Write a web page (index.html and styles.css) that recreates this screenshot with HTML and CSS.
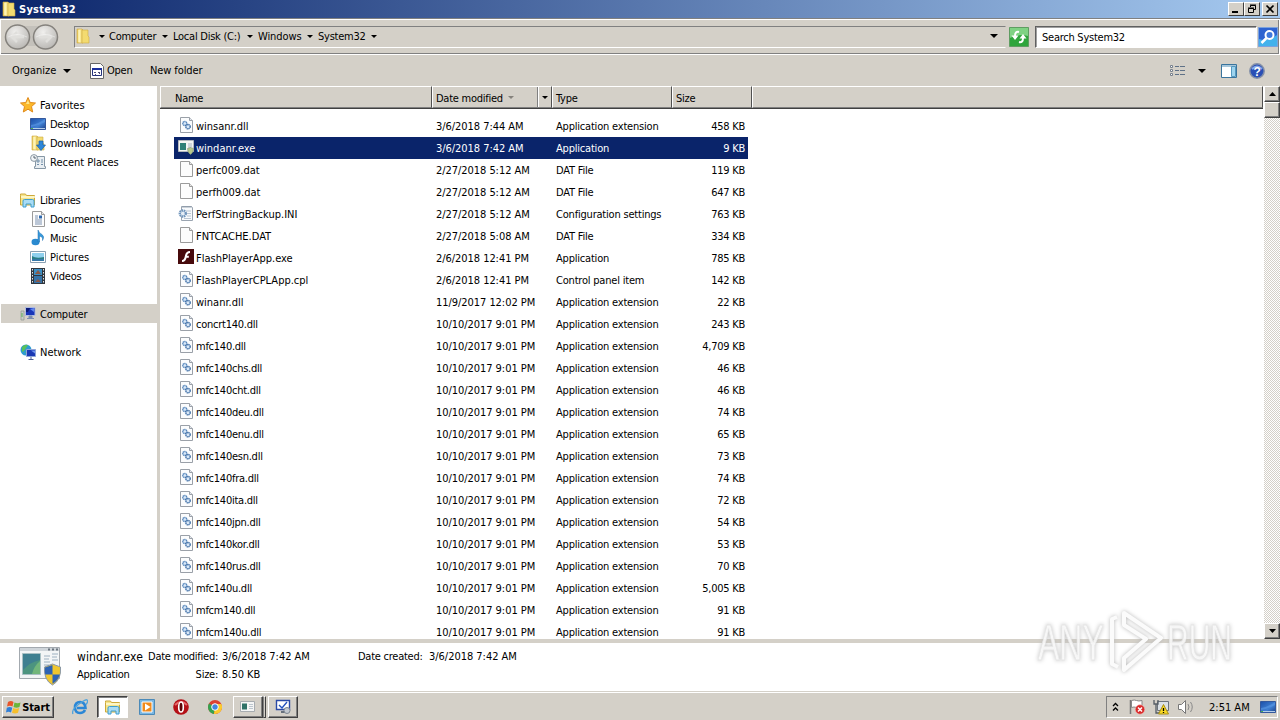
FILE: index.html
```html
<!DOCTYPE html>
<html lang="en">
<head>
  <meta charset="UTF-8" />
  <title>System32</title>
  <link rel="stylesheet" href="styles.css">
</head>
<body>
  <!-- icons used more than once -->
  <svg class="defs" width="0" height="0">
    <linearGradient id="gFolder" x1="0" x2="1"><stop offset="0" stop-color="#e5c452"/><stop offset=".5" stop-color="#fff3a8"/><stop offset="1" stop-color="#dcb540"/></linearGradient>
    <linearGradient id="gBlue" x1="0" y1="0" x2="1" y2="1"><stop offset="0" stop-color="#1c4fa8"/><stop offset=".6" stop-color="#3f7fd2"/><stop offset="1" stop-color="#1d3f86"/></linearGradient>
    <radialGradient id="gBall" cx=".4" cy=".3" r=".8"><stop offset="0" stop-color="#f0efed"/><stop offset="1" stop-color="#b4b2ae"/></radialGradient>
    <symbol id="folder" viewBox="0 0 16 16">
      <path d="M2 1h5l1 1v13H2z" fill="url(#gFolder)" stroke="#d0aa3c" stroke-width=".6"/>
      <path d="M7 2h6v6l1 1v6H7z" fill="#f3db70" stroke="#cfab45" stroke-width=".6"/>
      <path d="M4 2v12" stroke="#fffbd0"/>
    </symbol>
    <symbol id="library" viewBox="0 0 16 16">
      <path d="M.5 3.500V2h5l1 1.500h8V13H.5z" fill="#f6e58a" stroke="#cda93a"/>
      <path d="M1 5h14" stroke="#fffbd9" stroke-width="1.500"/>
      <path d="M3 15V9q0-1.500 1.500-1.500h8Q14 7.500 14 9v6h-3v-3H6v3z" fill="#a9dcf5" stroke="#3e9ecf"/>
    </symbol>
    <symbol id="desktop" viewBox="0 0 16 16">
      <path d="M.5 2.500h15v11H.5z" fill="url(#gBlue)" stroke="#34589c"/>
      <path d="M1 9q7-1 14-6v3q-7 4-14 5z" fill="#5c9ae4" opacity=".6"/>
      <path d="M1 12.500h14" stroke="#b5cde8"/><path d="M1 12.500h2" stroke="#4bb34f"/>
    </symbol>
    <symbol id="dll" viewBox="0 0 16 16">
      <path d="M2.500.5h9l3 3v12h-12z" fill="#fbfcfd" stroke="#9aa0a8"/>
      <path d="M11.500.5v3h3" fill="#e4e8ee" stroke="#9aa0a8"/>
      <circle cx="6.800" cy="6.500" r="2" fill="#d9e8f8" stroke="#5686bb" stroke-width="1.400" stroke-dasharray="1.200 .4"/>
      <circle cx="10" cy="9.700" r="2.200" fill="#d9e8f8" stroke="#3c6ca4" stroke-width="1.400" stroke-dasharray="1.200 .4"/>
    </symbol>
    <symbol id="page" viewBox="0 0 16 16">
      <path d="M2.500.5h9l3 3v12h-12z" fill="#fcfcfc" stroke="#9b9b9b"/>
      <path d="M11.500.5v3h3" fill="#e8e8e8" stroke="#9b9b9b"/>
    </symbol>
    <symbol id="ini" viewBox="0 0 16 16">
      <path d="M3.500 1.500h10l1 1v13h-11z" fill="#f8fafc" stroke="#9aa4b0"/>
      <path d="M5 1v2M7 1v2M9 1v2M11 1v2M13 1v2" stroke="#8794a4" stroke-width=".8"/>
      <path d="M8 6h5M9 8.500h4M9 11h4M6 13.500h7" stroke="#b8c4d2"/>
      <circle cx="4.800" cy="8.500" r="3" fill="#e6eef6" stroke="#6f94bb" stroke-width="2.400" stroke-dasharray="1.500 .6"/>
    </symbol>
    <symbol id="exe" viewBox="0 0 16 16">
      <path d="M.5 1.500h15v11H.5z" fill="#f4f5f3" stroke="#b3b8bd"/>
      <path d="M2 4h6v7H2z" fill="#2f8077"/><path d="M10 5h4M10 7h4M10 9h3" stroke="#a9b7c4"/>
      <path d="M9.500 9.500l3-1 3 1q0 4-3 6-3-2-3-6z" fill="#b8c98c" stroke="#7f917a" stroke-width=".6"/>
    </symbol>
    <symbol id="flash" viewBox="0 0 16 16">
      <path d="M0 0h16v15H0z" fill="#470a0c"/>
      <path d="M12 3Q8.500 3 7.800 7.500T4 12M7.300 7.700h3.500" fill="none" stroke="#fff" stroke-width="2"/>
    </symbol>
    <symbol id="computer" viewBox="0 0 16 16">
      <path d="M1 5h3v9H1z" fill="#c8ccc8" stroke="#8e958f" stroke-width=".7"/><path d="M2 7v4" stroke="#5cb357"/>
      <path d="M5.500 1.500h9.500v8H5.500z" fill="#1935b8" stroke="#aebbe0"/>
      <path d="M6 2h4l-2 4H6z" fill="#0a1a78"/><path d="M10 3l4-1v4z" fill="#5f86ee"/>
      <path d="M9 10h3v2H9zM7 12.500h7" fill="#7c8cb0" stroke="#7c8cb0"/>
    </symbol>
  </svg>

  <div class="titlebar">
    <svg class="ico"><use href="#folder"/></svg>
    <span class="title">System32</span>
    <div class="winbtns">
      <span class="wbtn"><svg width="14" height="12"><path d="M3 9h6" stroke="#000" stroke-width="2"/></svg></span>
      <span class="wbtn"><svg width="14" height="12"><path d="M5.500 4V2.500h5v4H9M5 2h6M3.500 5.500h5v4h-5zM3 5h6" fill="none" stroke="#000"/></svg></span>
      <span class="wbtn close"><svg width="14" height="12"><path d="M3.500 2.500l7 7M10.500 2.500l-7 7" stroke="#000" stroke-width="1.700"/></svg></span>
    </div>
  </div>

  <div class="navbar">
    <svg class="backfwd" width="56" height="28">
      <path d="M14 3h28v20H14z" fill="#c4c1bb"/>
      <circle cx="13.500" cy="14" r="12" fill="url(#gBall)" stroke="#85827d" stroke-width="1.500"/>
      <circle cx="41.500" cy="14" r="12" fill="url(#gBall)" stroke="#85827d" stroke-width="1.500"/>
      <path d="M20 14H8M13 9l-5 5 5 5M35 14h12M42 9l5 5-5 5" fill="none" stroke="#e0dfdc" stroke-width="2.500"/>
      <path d="M4 14q9-5 19 0M32 14q9-5 19 0" fill="none" stroke="#fff" opacity=".4"/>
    </svg>
    <div class="address">
      <svg class="ico"><use href="#folder"/></svg>
      <i class="arr a1"></i><span class="c1">Computer</span>
      <i class="arr"></i><span class="c2">Local Disk (C:)</span>
      <i class="arr"></i><span class="c3">Windows</span>
      <i class="arr"></i><span class="c4">System32</span>
      <i class="arr"></i>
      <i class="arr big drop"></i>
    </div>
    <svg class="refresh" width="20" height="20">
      <path d="M.5.5h19v19H.5z" fill="#2fa53c" stroke="#5f9d62"/><path d="M1 1h18v8Q10 6 1 11z" fill="#7fd283"/>
      <path d="M10 5q-4-1-4 4M10 15q4 1 4-4" fill="none" stroke="#fff" stroke-width="2"/>
      <path d="M2.500 8.500h7L6 13zM10.500 11.500h7L14 7z" fill="#fff"/>
    </svg>
    <div class="search">Search System32</div>
    <svg class="go" width="20" height="20">
      <path d="M.5.5h19v19H.5z" fill="#2e63d0" stroke="#7ba2dd"/><path d="M1 12q9 3 18-4v11H1z" fill="#43b2ec"/>
      <circle cx="11.500" cy="8" r="4" fill="#3f78dc" stroke="#fff" stroke-width="2"/><path d="M8.500 11l-5 5" stroke="#fff" stroke-width="2.500"/>
    </svg>
  </div>

  <div class="toolbar">
    <span class="t1">Organize</span><i class="arr big"></i>
    <svg class="openico" width="14" height="16"><path d="M.5.5h10l3 3v12H.5z" fill="#fff" stroke="#666"/><path d="M2.500 5.500h9v7h-9z" fill="#fff" stroke="#26347c"/><path d="M2 6h10" stroke="#1b2f9c" stroke-width="2"/><path d="M4 9.500h2M8 9.500h2M5 11.500h1M9 10.500h1" stroke="#4a4a7a"/></svg>
    <span class="t2">Open</span>
    <span class="t3">New folder</span>
    <svg class="views" width="16" height="14"><path d="M.5 1.500h2v2h-2zM.5 5.500h2v2h-2zM.5 9.500h2v2h-2z" fill="#fff" stroke="#77808c"/><path d="M5 2.500h4M10 2.500h5M5 6.500h4M10 6.500h5M5 10.500h4M10 10.500h5" stroke="#5f7187"/></svg>
    <i class="arr big"></i>
    <svg class="preview" width="16" height="14"><path d="M.5.5h15v13H.5z" fill="#fff" stroke="#39749d"/><path d="M1 2h14" stroke="#4f8db5"/><path d="M10.500 2.500h4v10h-4z" fill="#9ed4ef" stroke="#5598bf"/></svg>
    <svg class="help" width="16" height="16"><circle cx="8" cy="8" r="7.200" fill="#2a4fb5" stroke="#8490a8" stroke-width="1.500"/><path d="M3 6q5-5 10 0" stroke="#85a8ea" stroke-width="2" fill="none"/><text x="8" y="12.500" text-anchor="middle">?</text></svg>
  </div>

  <div class="main">
    <div class="sidebar">
      <div class="item wide"><svg class="ico"><path d="M8 .5l2.200 5 5.300.5-4 3.600 1.200 5.400L8 12.200 3.300 15l1.200-5.400L.5 6l5.300-.5z" fill="#fbb829" stroke="#e08a1c"/><path d="M8 3l1.500 4H6z" fill="#ffe68a"/></svg><span>Favorites</span></div>
      <div class="item sub"><svg class="ico"><use href="#desktop"/></svg><span>Desktop</span></div>
      <div class="item sub"><svg class="ico"><use href="#folder"/><path d="M9 6h4v4h2.500L11 15.500 6.500 10H9z" fill="#2c86d8" stroke="#1b5ea6" stroke-width=".7"/></svg><span>Downloads</span></div>
      <div class="item sub wide"><svg class="ico"><path d="M5.500 2.500h9v10h1v2h-11v-2h1z" fill="#e9eef2" stroke="#8697a5"/><path d="M7 6h2v2H7zM11 6h2M11 8h2M7 10.500h2M11 10.500h2" fill="none" stroke="#7390aa"/><circle cx="4" cy="4" r="3.400" fill="#f2f5f7" stroke="#8a97a2"/><path d="M4 2v2h2" fill="none" stroke="#55626e"/></svg><span>Recent Places</span></div>
      <div class="item"></div>
      <div class="item"><svg class="ico"><use href="#library"/></svg><span>Libraries</span></div>
      <div class="item sub"><svg class="ico"><use href="#page"/><path d="M5 5h3M5 7h3M5 9h7M5 11h7M5 13h7" stroke="#7d92b1"/><path d="M9 4.500h3v3H9z" fill="#2f68ad"/></svg><span>Documents</span></div>
      <div class="item sub"><svg class="ico"><ellipse cx="5.500" cy="12" rx="4" ry="3.200" fill="#2a8ad0"/><path d="M8 12V0q1 3 4 4.500 3 2 .5 6 1-3.500-3-4.500v6z" fill="#389bdc" stroke="#1c6fb0" stroke-width=".5"/></svg><span>Music</span></div>
      <div class="item sub wide"><svg class="ico"><path d="M.5 2.500h15v11H.5z" fill="#fff" stroke="#8aa0b2"/><path d="M2 4h12v5H2z" fill="#8fd0ee"/><path d="M2 7q4 3 12 1v4H2z" fill="#2a7f86"/><path d="M2 10h12v2H2z" fill="#3578a8"/></svg><span>Pictures</span></div>
      <div class="item sub"><svg class="ico"><path d="M1 0h14v16H1z" fill="#30363d"/><path d="M4 1h8v6H4z" fill="#3b8fc4"/><path d="M4 8h8v7H4z" fill="#3573a8"/><path d="M5 6l3-4 3 4zM5 14l3-3 3 3z" fill="#8a5948"/><path d="M2.500 1v15M13.500 1v15" stroke="#e3e7ea" stroke-dasharray="1.500 1.500"/></svg><span>Videos</span></div>
      <div class="item"></div>
      <div class="item on"><svg class="ico"><use href="#computer"/></svg><span>Computer</span></div>
      <div class="item"></div>
      <div class="item wide"><svg class="ico"><circle cx="6" cy="6" r="5.500" fill="#2d9bd2"/><path d="M2 3q3-3 6-2L6 4 4 7 2 8zM5 8l4 1-2 2z" fill="#5ac15a"/><path d="M6.500 5.500h9v7h-9z" fill="#1a38b4" stroke="#8fa5d8"/><path d="M11 6.500l4 0v3z" fill="#6f95ee"/><path d="M11 13v2M8.500 15.500h5" stroke="#4b5f98"/></svg><span>Network</span></div>
    </div>

    <div class="content">
      <div class="list">
        <div class="thead">
          <span class="th name">Name</span>
          <span class="th date"><b>Date modified</b><i class="arr gray"></i><em><i class="arr"></i></em></span>
          <span class="th type">Type</span>
          <span class="th size">Size</span>
          <span class="th rest"></span>
        </div>
        <div class="rows" id="rows"></div>
      </div>
      <div class="scroll">
        <span class="sbtn"><svg width="7" height="4"><path d="M3.500 0L7 4H0z"/></svg></span>
        <span class="thumb"></span>
        <span class="track"></span>
        <span class="sbtn"><svg width="7" height="4"><path d="M3.500 4L7 0H0z"/></svg></span>
      </div>
    </div>
  </div>

  <div class="details">
    <svg width="44" height="42">
      <path d="M1.500 2.500h40v31h-40z" fill="#f3f5f6" stroke="#a3a9af"/><path d="M2 4.500h39" stroke="#cfd5da" stroke-width="3"/><path d="M30 4.500h2M34 4.500h2M38 4.500h2" stroke="#6c7680" stroke-width="2"/>
      <path d="M4.500 8.500h18v21h-18z" fill="#4c947f" stroke="#a7bfc3"/><path d="M5 9h17v6Q12 17 5 25z" fill="#3e7f90"/><path d="M14 29q2-8 8-13v13z" fill="#72b67b"/>
      <path d="M26 11h6M26 14h5M26 17h6M26 20h5M34 9h6M34 12h5M34 15h6" stroke="#9db0c0"/>
      <path d="M34.500 19l8 3q1 13-8 18-9-5-8-18z" fill="#f0c62e" stroke="#8a98a8"/>
      <path d="M34.500 20v9.500h-7.300q-.6-3-.2-7zM34.500 29.500h7.300q-1.600 6-7.300 9.300z" fill="#2d63b4"/>
    </svg>
    <div class="dcol d1"><span class="fname">windanr.exe</span><span>Application</span></div>
    <div class="dcol d2"><span>Date modified:</span><span>Size:</span></div>
    <div class="dcol d3"><span>3/6/2018 7:42 AM</span><span>8.50 KB</span></div>
    <div class="dcol d4"><span>Date created:</span></div>
    <div class="dcol d5"><span>3/6/2018 7:42 AM</span></div>
  </div>

  <div class="taskbar">
    <div class="start">
      <svg width="16" height="16"><path d="M2 3q3-2 5.500 0L6.500 7.500Q4 6 1 7.500z" fill="#e8552a"/><path d="M8.500 3.500q3 1.500 6 0l-1 4.500q-3 1.500-6 0z" fill="#6ab53a"/><path d="M.8 8.800q3-1.500 5.500 0L5 13.500q-2.500-1.500-5 0z" fill="#2f7fd8"/><path d="M7.200 9q3 1.500 6 0L12 13.800q-3 1.500-6 0z" fill="#f6bf2c"/></svg>
      <span>Start</span>
    </div>
    <div class="quick">
      <svg class="ql" viewBox="0 0 16 16"><path d="M13 11q-1.500 3-5 3-5 0-5-5.500T8 3q5 0 5.500 6H5" fill="none" stroke="#2b87d6" stroke-width="2.600"/><path d="M1 15Q-1 11 7 5t8.500-3.500Q16 3 14 5.500" fill="none" stroke="#4fa3dd" stroke-width="1.300"/></svg>
      <span class="tb pressed"><svg class="ql"><use href="#library"/></svg></span>
      <svg class="ql" viewBox="0 0 16 16"><path d="M.5.5h15v15H.5z" fill="#79b6e2" stroke="#4c8ab8"/><path d="M3 3h10v10H3z" fill="#f08a1d" stroke="#fff"/><path d="M6 4.500L11.500 8 6 11.500z" fill="#fff"/></svg>
      <svg class="ql" viewBox="0 0 16 16"><circle cx="8" cy="8" r="7.800" fill="#b41016"/><path d="M2 6q6-6 12 0" stroke="#e4686a" stroke-width="2" fill="none"/><ellipse cx="8" cy="8" rx="2.300" ry="5" fill="#5b0508" stroke="#fff" stroke-width="1.600"/></svg>
      <svg class="ql" viewBox="0 0 16 16"><circle cx="8" cy="8" r="7" fill="#dc4133"/><path d="M8 8L2 4.500A7 7 0 0 0 7 15z" fill="#33a350"/><path d="M8 8L7 15A7 7 0 0 0 14.300 5H8z" fill="#fbcb2e"/><circle cx="8" cy="8" r="3.300" fill="#4285e0" stroke="#fff"/></svg>
      <span class="tb"><svg class="ql" viewBox="0 0 16 16"><path d="M.5 2.500h14v10H.5z" fill="#f4f5f5" stroke="#a7acb0"/><path d="M2 4.500h5v6H2z" fill="#2f7268"/><path d="M9 5.500h4M9 7.500h4M9 9.500h4" stroke="#bcc6ce"/></svg></span><span class="edge"></span>
      <span class="tb"><svg class="ql" viewBox="0 0 16 16"><path d="M1.500 1.500h13v9h-13z" fill="#fff" stroke="#2949a6" stroke-width="1.400"/><path d="M4 6l3 3 5-6" fill="none" stroke="#2352be" stroke-width="1.400"/><path d="M6 13h4" stroke="#67707c" stroke-width="2"/><circle cx="12" cy="11.500" r="3" fill="#c2c8cf" stroke="#7c8590"/></svg></span>
    </div>
    <div class="tray">
      <svg class="chev" width="7" height="10"><path d="M1 4l2.500-2.500L6 4M1 8.500L3.500 6 6 8.500" fill="none" stroke="#000" stroke-width="1.300"/></svg>
      <svg class="flag" width="16" height="16"><path d="M1.500 1v14" stroke="#777" stroke-width="1.500"/><path d="M2.500 1.500q3-1 5 0t5.500 0v7q-3 1-5.500 0t-5 0z" fill="#fff" stroke="#888"/><circle cx="11" cy="10.500" r="4.700" fill="#d92a2a" stroke="#f3b4b0" stroke-width=".6"/><path d="M9 8.500l4 4M13 8.500l-4 4" stroke="#fff" stroke-width="1.500"/></svg>
      <svg class="net" width="16" height="16"><path d="M4.500 2.500h11v9h-11z" fill="#dbe1e6" stroke="#6b737c"/><path d="M1 1v4h4V1M3 5v9h4" fill="none" stroke="#555d66" stroke-width="1.300"/><path d="M10.500 5.500l5 9.500h-10z" fill="#f8d824" stroke="#a78e18"/><path d="M10.500 9v3M10.500 13v1" stroke="#000" stroke-width="1.300"/></svg>
      <svg class="vol" width="17" height="16"><path d="M1.500 5.500h3l4-4v13l-4-4h-3z" fill="#fff" stroke="#777"/><path d="M11 5q2 3 0 6M13.500 3q3.500 5 0 10" fill="none" stroke="#888"/></svg>
      <span class="clock">2:51 AM</span>
      <svg class="ico"><use href="#desktop"/></svg>
    </div>
  </div>

  <svg class="watermark" width="206" height="74" viewBox="0 0 206 74">
    <g class="wm">
      <text transform="translate(6 56) scale(.64 1)">ANY</text>
      <text transform="translate(135 56) scale(.6 1)">RUN</text>
      <path class="play" d="M92 9l37 25-37 32V54l22-19-22-14zM85 13l-5 2v45l6 3"/>
    </g>
  </svg>

  <script>
    const ext = "Application extension";
    const oct = "10/10/2017 9:01 PM";
    const files = [
      ["dll", "winsanr.dll", "3/6/2018 7:44 AM", ext, "458 KB"],
      ["exe", "windanr.exe", "3/6/2018 7:42 AM", "Application", "9 KB"],
      ["page", "perfc009.dat", "2/27/2018 5:12 AM", "DAT File", "119 KB"],
      ["page", "perfh009.dat", "2/27/2018 5:12 AM", "DAT File", "647 KB"],
      ["ini", "PerfStringBackup.INI", "2/27/2018 5:12 AM", "Configuration settings", "763 KB"],
      ["page", "FNTCACHE.DAT", "2/27/2018 5:08 AM", "DAT File", "334 KB"],
      ["flash", "FlashPlayerApp.exe", "2/6/2018 12:41 PM", "Application", "785 KB"],
      ["dll", "FlashPlayerCPLApp.cpl", "2/6/2018 12:41 PM", "Control panel item", "142 KB"],
      ["dll", "winanr.dll", "11/9/2017 12:02 PM", ext, "22 KB"],
      ["dll", "concrt140.dll", oct, ext, "243 KB"],
      ["dll", "mfc140.dll", oct, ext, "4,709 KB"],
      ["dll", "mfc140chs.dll", oct, ext, "46 KB"],
      ["dll", "mfc140cht.dll", oct, ext, "46 KB"],
      ["dll", "mfc140deu.dll", oct, ext, "74 KB"],
      ["dll", "mfc140enu.dll", oct, ext, "65 KB"],
      ["dll", "mfc140esn.dll", oct, ext, "73 KB"],
      ["dll", "mfc140fra.dll", oct, ext, "74 KB"],
      ["dll", "mfc140ita.dll", oct, ext, "72 KB"],
      ["dll", "mfc140jpn.dll", oct, ext, "54 KB"],
      ["dll", "mfc140kor.dll", oct, ext, "53 KB"],
      ["dll", "mfc140rus.dll", oct, ext, "70 KB"],
      ["dll", "mfc140u.dll", oct, ext, "5,005 KB"],
      ["dll", "mfcm140.dll", oct, ext, "91 KB"],
      ["dll", "mfcm140u.dll", oct, ext, "91 KB"]
    ];

    document.getElementById("rows").innerHTML = files.map((f, i) => `
      <div class="row${f[0] === "exe" ? " selected" : ""}">
        <svg class="ico"><use href="#${f[0]}"/></svg>
        <span class="fn${i < 9 ? " wide" : ""}">${f[1]}</span>
        <span class="fd">${f[2]}</span>
        <span class="ft">${f[3]}</span>
        <span class="fs">${f[4]}</span>
      </div>`).join("");
  </script>
</body>
</html>
```
FILE: styles.css
```css
* {
  box-sizing: border-box;
}

body {
  margin: 0;
  width: 1280px;
  height: 720px;
  overflow: hidden;
  display: flex;
  flex-direction: column;
  background: #d4d0c8;
  color: #000;
  font: 11px "DejaVu Sans Condensed", "DejaVu Sans", sans-serif;
  letter-spacing: -0.25px;
  white-space: nowrap;
  position: relative;
}

svg { flex: none; display: block; }
.defs { position: absolute; }
.ico { width: 16px; height: 16px; }
.wide { letter-spacing: 0; }

/* small drop-down arrows */
.arr {
  flex: none;
  width: 0;
  height: 0;
  border: 3px solid transparent;
  border-top-color: #000;
  border-bottom: 0;
}
.arr.big { border-width: 4px 4px 0; }
.arr.gray { border-top-color: #85827c; }

/* title bar */
.titlebar {
  height: 18px;
  flex: none;
  display: flex;
  align-items: center;
  padding: 0 2px 0 1px;
  background: linear-gradient(90deg, #0a246a, #a6caf0);
}
.title {
  margin-left: 2px;
  color: #fff;
  font-weight: bold;
  letter-spacing: 0.25px;
}
.winbtns { margin-left: auto; display: flex; }
.wbtn {
  width: 16px;
  height: 14px;
  background: #d4d0c8;
  border: 1px solid;
  border-color: #fff #404040 #404040 #fff;
}
.wbtn.close { margin-left: 2px; }

/* address bar */
.navbar {
  height: 36px;
  flex: none;
  margin-top: 1px;
  display: flex;
  align-items: center;
  border: 1px solid #fff;
  box-shadow: inset 0 -1px #808080, inset -1px 0 #808080, 0 -1px #808080;
  padding-left: 3px;
}
.address {
  margin-left: 14px;
  width: 932px;
  height: 22px;
  display: flex;
  align-items: center;
  padding-bottom: 2px;
  border: 1px solid;
  border-color: #808080 #d4d0c8 #fff #808080;
}
.address .arr { margin: 0 5px; }
.address .a1 { margin-left: 8px; }
.c1 { width: 47px; margin-left: -1px; margin-right: 1px; }
.c2 { width: 69px; }
.c3 { width: 44px; letter-spacing: -0.1px; }
.c4 { width: 48px; }
.address .drop { margin-left: auto; margin-right: 7px; }
.refresh { margin-left: 3px; }
.search {
  margin-left: 6px;
  width: 222px;
  height: 22px;
  line-height: 21px;
  padding-left: 6px;
  background: #fff;
  border: 1px solid;
  border-color: #606060 #fff #fff #606060;
  box-shadow: inset 1px 1px #a0a0a0;
}
.go { margin-left: 1px; }

/* command bar */
.toolbar {
  height: 31px;
  flex: none;
  display: flex;
  align-items: center;
  padding-left: 12px;
}
.t1 { width: 44px; margin-right: 7px; letter-spacing: 0; }
.openico { margin-left: 19px; }
.t2 { width: 27px; margin-left: 3px; }
.t3 { margin-left: 16px; letter-spacing: -0.1px; }
.views { margin-left: auto; margin-right: 12px; }
.preview { margin-left: 15px; }
.help { margin-left: 12px; margin-right: 15px; }
.help text { font: bold 12px "Liberation Sans", sans-serif; fill: #fff; }

.main {
  height: 553px;
  flex: none;
  display: flex;
}
.sidebar {
  width: 157px;
  background: #fff;
  padding-top: 9px;
}
.item {
  height: 19px;
  margin-left: 1px;
  padding-left: 19px;
  display: flex;
  align-items: center;
  gap: 4px;
}
.item span { padding-top: 2px; }
.item.sub { padding-left: 29px; }
.item.on { background: #d4d0c8; }

/* file list */
.content {
  margin-left: 3px;
  flex: 1;
  display: flex;
  background: #fff;
}
.list { flex: 1; overflow: hidden; }
.thead {
  height: 23px;
  display: flex;
  background: #d4d0c8;
  border-bottom: 1px solid #404040;
}
.th {
  height: 22px;
  display: flex;
  align-items: center;
  padding: 2px 0 0 4px;
  border: 1px solid;
  border-color: #fff #505050 #808080 #fff;
}
.th.name { width: 272px; padding-left: 14px; }
.th.date { width: 120px; padding-left: 3px; padding-top: 0; }
.th.type { width: 120px; padding-left: 3px; }
.th.size { width: 80px; padding-left: 3px; }
.th.rest { flex: 1; }
.date b { font-weight: normal; width: 67px; margin-right: 5px; padding-top: 2px; }
.date em {
  margin-left: auto;
  width: 14px;
  height: 20px;
  padding-left: 4px;
  border-left: 1px solid #808080;
  box-shadow: inset 1px 0 #fff;
  display: flex;
  align-items: center;
}
.rows { padding-top: 6px; }
.row {
  width: 574px;
  height: 22px;
  margin-left: 14px;
  padding-left: 4px;
  display: flex;
  align-items: center;
}
.row .ico { margin-bottom: 2px; }
.row.selected { background: #0a246a; color: #fff; }
.fn { width: 240px; margin-left: 2px; }
.fd { width: 120px; letter-spacing: -0.05px; }
.ft { width: 120px; letter-spacing: -0.2px; }
.fs { width: 69px; text-align: right; }

.scroll {
  width: 17px;
  display: flex;
  flex-direction: column;
  border-left: 1px solid #fff;
}
.sbtn, .thumb {
  flex: none;
  height: 16px;
  display: flex;
  align-items: center;
  justify-content: center;
  background: #d4d0c8;
  border: 1px solid;
  border-color: #fff #404040 #404040 #fff;
  box-shadow: inset -1px -1px #808080;
}
.track {
  flex: 1;
  background: repeating-conic-gradient(#fff 0 25%, #d4d0c8 0 50%) 0 0 / 2px 2px;
}

/* details pane */
.details {
  height: 48px;
  flex: none;
  margin-top: 4px;
  display: flex;
  background: #fff;
  padding: 2px 0 0 18px;
}
.dcol { display: flex; flex-direction: column; padding-top: 3px; }
.dcol span { height: 18px; line-height: 18px; }
.d1 { margin-left: 15px; width: 71px; }
.d2 { width: 70px; text-align: right; }
.d3 { margin-left: 4px; width: 136px; letter-spacing: -0.03px; }
.d4 { width: 66px; }
.d5 { margin-left: 5px; letter-spacing: -0.03px; }
.fname { font-size: 12px; letter-spacing: 0.1px; }

/* taskbar */
.taskbar {
  flex: 1;
  margin-top: 1px;
  display: flex;
  align-items: center;
  border-top: 1px solid #fff;
  padding: 1px 2px 0;
}
.start, .tb {
  height: 22px;
  display: flex;
  align-items: center;
  justify-content: center;
  background: #d4d0c8;
  border: 1px solid;
  border-color: #fff #404040 #404040 #fff;
  box-shadow: inset -1px -1px #808080;
}
.start { width: 52px; font-weight: bold; letter-spacing: -0.1px; }
.quick { display: flex; align-items: center; }
.ql { width: 16px; height: 16px; margin-left: 18px; }
.tb { width: 30px; margin-left: 17px; }
.tb .ql { margin: 0; }
.pressed {
  width: 31px;
  margin-left: 9px;
  margin-right: -7px;
  background: #fff;
  border-color: #404040 #fff #fff #404040;
  box-shadow: inset 1px 1px #808080;
}
.quick > .tb:not(.pressed) { margin-left: 10px; }
.edge { width: 3px; height: 22px; border: 1px solid; border-color: #fff #404040 #404040 #808080; }
.quick > .edge + .tb:not(.pressed) { margin-left: 2px; }
.tray {
  margin-left: auto;
  width: 172px;
  height: 22px;
  display: flex;
  align-items: center;
  border: 1px solid;
  border-color: #808080 #fff #fff #808080;
}
.chev { margin-left: 5px; }
.flag { margin-left: 10px; }
.net { margin-left: 8px; }
.vol { margin-left: 8px; }
.clock { margin-left: 15px; width: 41px; letter-spacing: 0; }
.tray .ico { margin-left: 10px; }

.watermark { position: absolute; left: 1032px; top: 604px; overflow: visible; }
.wm {
  fill: #fff;
  fill-opacity: 0.8;
  stroke: #e6e6e6;
  stroke-width: 0.8;
  filter: drop-shadow(0 0 2px #b8b8b8);
}
.wm text { font: 50px "Liberation Sans", sans-serif; letter-spacing: 0; }
.wm .play { fill: none; stroke: #fbfbfb; stroke-width: 4; stroke-linejoin: round; }
```
